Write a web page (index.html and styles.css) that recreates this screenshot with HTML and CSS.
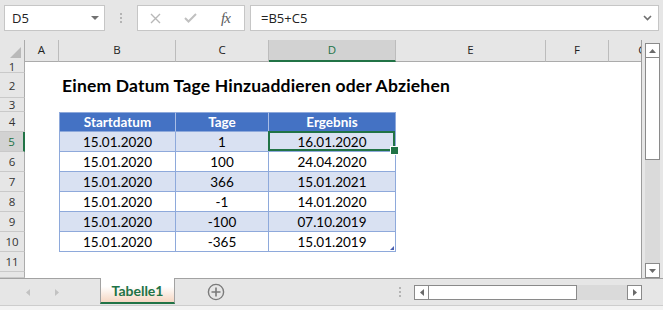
FILE: index.html
```html
<!DOCTYPE html>
<html>
<head>
  <meta charset="utf-8" />
  <title>Einem Datum Tage Hinzuaddieren oder Abziehen</title>
  <link rel="stylesheet" href="styles.css">
</head>
<body>
  <div class="app">
    <div class="formula-bar">
      <div class="name-box"><span>D5</span><span class="caret"></span></div>
      <div class="grip">
        <svg width="3" height="11" viewBox="0 0 3 11"><rect x="0" y="0" width="2" height="2" fill="#b4b4b4"/><rect x="0" y="4" width="2" height="2" fill="#b4b4b4"/><rect x="0" y="8" width="2" height="2" fill="#b4b4b4"/></svg>
      </div>
      <div class="fx-tools">
        <span class="slot">
          <svg width="11" height="11" viewBox="0 0 11 11"><path d="M1 1L10 10M10 1L1 10" stroke="#b8b8b8" stroke-width="1.4" fill="none"/></svg>
        </span>
        <span class="slot">
          <svg width="13" height="10" viewBox="0 0 13 10"><path d="M1 5L4.5 8.5L12 1" stroke="#c0c0c0" stroke-width="2" fill="none"/></svg>
        </span>
        <span class="slot fx">fx</span>
      </div>
      <div class="formula">
        <span>=B5+C5</span>
        <svg width="9" height="6" viewBox="0 0 9 6"><path d="M1 1L4.5 4.5L8 1" stroke="#6f6f6f" stroke-width="1.6" fill="none"/></svg>
      </div>
    </div>

    <div class="main">
      <div class="sheet">
        <div class="row hdr">
          <div class="corner">
            <svg width="11" height="11" viewBox="0 0 11 11"><polygon points="11,0 11,11 0,11" fill="#b9b9b9"/></svg>
          </div>
          <div class="ch">A</div>
          <div class="ch">B</div>
          <div class="ch">C</div>
          <div class="ch active">D</div>
          <div class="ch">E</div>
          <div class="ch">F</div>
          <div class="ch">G</div>
        </div>
        <div class="row r1"><div class="rh">1</div></div>
        <div class="row r2">
          <div class="rh">2</div>
          <div class="title">Einem Datum Tage Hinzuaddieren oder Abziehen</div>
        </div>
        <div class="row r3"><div class="rh">3</div></div>
        <div class="row rn">
          <div class="rh">4</div>
          <div class="cell b t th first">Startdatum</div>
          <div class="cell c t th first">Tage</div>
          <div class="cell d t th first">Ergebnis</div>
        </div>
        <div class="row rn band">
          <div class="rh active">5</div>
          <div class="cell b t">15.01.2020</div>
          <div class="cell c t">1</div>
          <div class="cell d t selected">16.01.2020</div>
        </div>
        <div class="row rn">
          <div class="rh">6</div>
          <div class="cell b t">15.01.2020</div>
          <div class="cell c t">100</div>
          <div class="cell d t">24.04.2020</div>
        </div>
        <div class="row rn band">
          <div class="rh">7</div>
          <div class="cell b t">15.01.2020</div>
          <div class="cell c t">366</div>
          <div class="cell d t">15.01.2021</div>
        </div>
        <div class="row rn">
          <div class="rh">8</div>
          <div class="cell b t">15.01.2020</div>
          <div class="cell c t">-1</div>
          <div class="cell d t">14.01.2020</div>
        </div>
        <div class="row rn band">
          <div class="rh">9</div>
          <div class="cell b t">15.01.2020</div>
          <div class="cell c t">-100</div>
          <div class="cell d t">07.10.2019</div>
        </div>
        <div class="row rn">
          <div class="rh">10</div>
          <div class="cell b t">15.01.2020</div>
          <div class="cell c t">-365</div>
          <div class="cell d t last">15.01.2019</div>
        </div>
        <div class="row rn"><div class="rh">11</div></div>
        <div class="row r12"><div class="rh"></div></div>
      </div>

      <div class="vbar">
        <div class="sb-btn">
          <svg width="7" height="4" viewBox="0 0 7 4"><polygon points="0,4 7,4 3.5,0" fill="#6a6a6a"/></svg>
        </div>
        <div class="v-thumb"></div>
        <div class="v-track"></div>
        <div class="sb-btn">
          <svg width="7" height="4" viewBox="0 0 7 4"><polygon points="0,0 7,0 3.5,4" fill="#6a6a6a"/></svg>
        </div>
      </div>
    </div>

    <div class="tab-bar">
      <div class="tab-nav">
        <svg width="4" height="7" viewBox="0 0 4 7"><polygon points="4,0 4,7 0,3.5" fill="#c2c2c2"/></svg>
        <svg width="4" height="7" viewBox="0 0 4 7"><polygon points="0,0 0,7 4,3.5" fill="#c2c2c2"/></svg>
      </div>
      <div class="tab">Tabelle1</div>
      <div class="add">
        <svg width="18" height="18" viewBox="0 0 18 18"><circle cx="9" cy="9" r="7.6" stroke="#7a7a7a" stroke-width="1.4" fill="none"/><path d="M9 4.5V13.5M4.5 9H13.5" stroke="#7a7a7a" stroke-width="1.6"/></svg>
      </div>
      <div class="spacer"></div>
      <div class="hgrip">
        <svg width="2" height="10" viewBox="0 0 2 10"><rect x="0" y="0" width="2" height="2" fill="#b4b4b4"/><rect x="0" y="4" width="2" height="2" fill="#b4b4b4"/><rect x="0" y="8" width="2" height="2" fill="#b4b4b4"/></svg>
      </div>
      <div class="hscroll">
        <div class="sb-btn">
          <svg width="4" height="7" viewBox="0 0 4 7"><polygon points="4,0 4,7 0,3.5" fill="#6a6a6a"/></svg>
        </div>
        <div class="h-thumb"></div>
        <div class="h-track"></div>
        <div class="sb-btn">
          <svg width="4" height="7" viewBox="0 0 4 7"><polygon points="0,0 0,7 4,3.5" fill="#6a6a6a"/></svg>
        </div>
      </div>
    </div>

    <div class="status"></div>
  </div>
</body>
</html>
```

FILE: styles.css
```css
* {
  box-sizing: border-box;
}
body {
  margin: 0;
  font-family: "Open Sans", sans-serif;
  background-color: #e6e6e6;
}
.app {
  width: 663px;
  height: 310px;
  display: flex;
  flex-direction: column;
  overflow: hidden;
}

/* formula bar */
.formula-bar {
  height: 40px;
  flex-shrink: 0;
  display: flex;
  padding: 5px 4px 0 4px;
}
.name-box {
  width: 101px;
  height: 26px;
  background-color: #fff;
  border: 1px solid #c6c6c6;
  display: flex;
  align-items: center;
  justify-content: space-between;
  padding: 0 5px 0 7px;
  font-size: 13px;
  color: #222;
}
.caret {
  border-left: 4px solid transparent;
  border-right: 4px solid transparent;
  border-top: 4px solid #727272;
}
.grip {
  width: 32px;
  display: flex;
  justify-content: center;
  padding-top: 8px;
}
.fx-tools {
  width: 108px;
  height: 26px;
  background-color: #fff;
  border: 1px solid #c6c6c6;
  display: flex;
  align-items: center;
}
.slot {
  width: 35px;
  display: flex;
  justify-content: center;
}
.fx {
  font-family: "Liberation Serif", serif;
  font-style: italic;
  font-size: 15px;
  color: #5c5c5c;
  letter-spacing: -1px;
}
.formula {
  margin-left: 5px;
  width: 409px;
  height: 26px;
  background-color: #fff;
  border: 1px solid #c6c6c6;
  display: flex;
  align-items: center;
  justify-content: space-between;
  padding: 0 6px 0 10px;
  font-size: 13px;
  color: #222;
}

/* sheet */
.main {
  height: 238px;
  flex-shrink: 0;
  display: flex;
}
.sheet {
  width: 642px;
  border-right: 1px solid #9c9c9c;
  background-color: #fff;
  overflow: hidden;
}
.row {
  display: grid;
  grid-template-columns: 25px 34px 117px 93px 127px 150px 63px 68px;
}
.hdr { height: 21px; }
.r1 { height: 12px; }
.r2 { height: 25px; }
.r3 { height: 14px; }
.rn { height: 20px; }
.r12 { height: 6px; }

.corner {
  background-color: #e6e6e6;
  border-right: 1px solid #ababab;
  border-bottom: 1px solid #ababab;
  display: flex;
  align-items: flex-end;
  justify-content: flex-end;
  padding: 0 3px 3px 0;
}
.ch {
  background-color: #e6e6e6;
  border-right: 1px solid #bcbcbc;
  border-bottom: 1px solid #ababab;
  font-size: 11.5px;
  line-height: 20px;
  text-align: center;
  color: #222;
}
.ch.active {
  background-color: #d2d2d2;
  border-bottom: 2px solid #217346;
  color: #217346;
}
.rh {
  grid-column: 1;
  background-color: #e6e6e6;
  border-right: 1px solid #ababab;
  border-bottom: 1px solid #c9c9c9;
  font-size: 11.5px;
  color: #333;
  display: flex;
  align-items: center;
  justify-content: center;
  overflow: hidden;
}
.rh.active {
  background-color: #d2d2d2;
  border-right: 2px solid #217346;
  color: #217346;
}
.title {
  grid-column: 3 / span 5;
  font-family: Lato, sans-serif;
  font-weight: bold;
  font-size: 17.5px;
  letter-spacing: 0.2px;
  color: #000;
  white-space: nowrap;
  padding-left: 3px;
  display: flex;
  align-items: center;
}
.cell {
  font-family: Lato, sans-serif;
  font-size: 13.5px;
  color: #000;
  display: flex;
  align-items: center;
  justify-content: center;
  position: relative;
}
.b { grid-column: 3; }
.c { grid-column: 4; }
.d { grid-column: 5; }
.t {
  border-right: 1px solid #8ea9db;
  border-bottom: 1px solid #8ea9db;
}
.b.t {
  border-left: 1px solid #8ea9db;
}
.th {
  background-color: #4472c4;
  color: #fff;
  font-weight: bold;
  border-right-color: #a9bde6;
}
.th.d {
  border-right-color: #8ea9db;
}
.first {
  border-top: 1px solid #8ea9db;
}
.band .t {
  background-color: #d9e1f2;
}

.selected::after {
  content: "";
  position: absolute;
  left: -1px;
  top: -1px;
  right: 0;
  bottom: 0;
  border: 2px solid #217346;
}
.selected::before {
  content: "";
  position: absolute;
  right: -4px;
  bottom: -4px;
  width: 7px;
  height: 7px;
  background-color: #217346;
  border: 1px solid #fff;
  z-index: 1;
}
.last::after {
  content: "";
  position: absolute;
  right: 1px;
  bottom: 1px;
  border-left: 4px solid transparent;
  border-bottom: 4px solid #4a5fb0;
}

/* vertical scrollbar */
.vbar {
  width: 21px;
  padding: 3px 3px 0 3px;
  display: flex;
  flex-direction: column;
}
.sb-btn {
  width: 15px;
  height: 15px;
  flex-shrink: 0;
  background-color: #fff;
  border: 1px solid #8a8a8a;
  display: flex;
  align-items: center;
  justify-content: center;
}
.v-thumb {
  height: 102px;
  background-color: #fff;
  border: 1px solid #8a8a8a;
  border-top: none;
}
.v-track {
  flex: 1;
  background-color: #dadada;
}

/* sheet tabs */
.tab-bar {
  height: 27px;
  flex-shrink: 0;
  border-top: 1px solid #a2a2a2;
  display: flex;
}
.tab-nav {
  width: 100px;
  display: flex;
  align-items: center;
  gap: 25px;
  padding: 0 0 0 26px;
}
.tab {
  width: 75px;
  height: 26px;
  margin-top: -1px;
  background: linear-gradient(#fff 35%, #f5d6c2);
  border-left: 1px solid #a2a2a2;
  border-right: 1px solid #a2a2a2;
  border-bottom: 2px solid #217346;
  font-family: Lato, sans-serif;
  font-weight: bold;
  font-size: 14px;
  color: #217346;
  display: flex;
  align-items: center;
  justify-content: center;
}
.add {
  margin-left: 32px;
  display: flex;
  align-items: center;
}
.spacer {
  flex: 1;
}
.hgrip {
  width: 16px;
  padding-left: 1px;
  display: flex;
  align-items: center;
}
.hscroll {
  width: 228px;
  height: 15px;
  margin: 6px 21px 0 0;
  display: flex;
}
.h-thumb {
  width: 148px;
  background-color: #fff;
  border: 1px solid #8a8a8a;
  border-left: none;
}
.h-track {
  flex: 1;
  background-color: #dadada;
}
.status {
  height: 5px;
  flex-shrink: 0;
  border-top: 1px solid #cdcdcd;
  background-color: #f3f3f3;
}
```
